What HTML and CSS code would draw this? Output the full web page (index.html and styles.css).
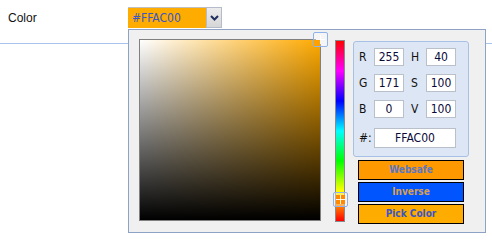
FILE: index.html
```html
<!DOCTYPE html>
<html>
<head>
<meta charset="utf-8">
<link rel="stylesheet" href="styles.css">
</head>
<body>
<div class="row">
  <label class="label">Color</label>
  <div class="field">
    <div class="value">#FFAC00</div>
    <div class="drop">
      <svg width="9" height="6" viewBox="0 0 9 6"><path d="M1 1 L4.5 4.5 L8 1" fill="none" stroke="#1f3060" stroke-width="2"/></svg>
    </div>
  </div>
</div>
<div class="popup">
  <div class="sv">
    <div class="sv-marker"><span class="mk-fill"></span><span class="mk-h"></span><span class="mk-v"></span></div>
  </div>
  <div class="hue">
    <div class="hue-marker"><span class="mk-fill"></span><span class="mk-h"></span><span class="mk-v"></span></div>
  </div>
  <div class="side">
    <div class="panel">
      <div class="grid">
        <span class="lbl">R</span><span class="inp">255</span><span class="lbl second">H</span><span class="inp">40</span>
        <span class="lbl">G</span><span class="inp">171</span><span class="lbl second">S</span><span class="inp">100</span>
        <span class="lbl">B</span><span class="inp">0</span><span class="lbl second">V</span><span class="inp">100</span>
      </div>
      <div class="hexrow">
        <span class="lbl">#:</span><span class="inp hex">FFAC00</span>
      </div>
    </div>
    <div class="buttons">
      <div class="btn websafe">Websafe</div>
      <div class="btn inverse">Inverse</div>
      <div class="btn pick">Pick Color</div>
    </div>
  </div>
</div>
</body>
</html>
```
FILE: styles.css
```css
html, body {
  margin: 0;
  padding: 0;
  background: #ffffff;
  width: 492px;
  height: 238px;
  overflow: hidden;
}
body {
  position: relative;
  font-family: "DejaVu Sans Condensed", "DejaVu Sans", sans-serif;
}
.row {
  display: flex;
  align-items: flex-start;
  height: 43px;
  border-bottom: 1px solid #a9c4ee;
}
.label {
  font-family: "Liberation Sans", Arial, sans-serif;
  font-size: 12px;
  color: #111;
  width: 120px;
  padding-left: 8px;
  padding-top: 11px;
}
.field {
  display: flex;
  margin-top: 7px;
  height: 21px;
}
.value {
  width: 74px;
  height: 20px;
  background: #ffac00;
  border-top: 1px solid #c0c0c0;
  color: #3a56c4;
  font-size: 12px;
  line-height: 20px;
  padding-left: 4px;
}
.drop {
  width: 14px;
  height: 19px;
  border: 1px solid #b4bccb;
  background: linear-gradient(#ececec, #d6d6d6);
  display: flex;
  align-items: center;
  justify-content: center;
}
.popup {
  position: absolute;
  left: 128px;
  top: 29px;
  width: 358px;
  height: 204px;
  box-sizing: border-box;
  border: 1px solid #8ea2c6;
  background: #f0f0f0;
  display: flex;
  align-items: flex-start;
  padding: 9px 0 0 10px;
}
.sv {
  position: relative;
  width: 180px;
  height: 180px;
  border: 1px solid #808080;
  background:
    linear-gradient(to top, #000 0%, rgba(0,0,0,0) 100%),
    linear-gradient(to right, #fff 0%, rgba(255,255,255,0) 100%),
    #ffaa00;
}
.sv-marker, .hue-marker {
  position: absolute;
  width: 13px;
  height: 13px;
  border: 1px solid #8fb2ea;
  border-radius: 2px;
  background: rgba(255,255,255,0.35);
}
.sv-marker {
  right: -8px;
  top: -8px;
}
.hue-marker {
  left: -3px;
  top: 151px;
}
.mk-fill {
  position: absolute;
  left: 0;
  top: 7px;
  width: 6px;
  height: 6px;
  background: #ffa200;
}
.hue-marker .mk-fill {
  left: 2px;
  top: 2px;
  width: 9px;
  height: 9px;
  background: #ff8a00;
}
.mk-h {
  position: absolute;
  left: 2px;
  top: 6px;
  width: 9px;
  height: 1px;
  background: rgba(255,255,255,0.9);
}
.mk-v {
  position: absolute;
  left: 6px;
  top: 2px;
  width: 1px;
  height: 9px;
  background: rgba(255,255,255,0.9);
}
.hue {
  position: relative;
  margin-left: 14px;
  margin-top: 1px;
  width: 8px;
  height: 180px;
  border: 1px solid #8a8a8a;
  background: linear-gradient(to bottom, #ff0000 0%, #ff00ff 16.66%, #0000ff 33.33%, #00ffff 50%, #00ff00 66.66%, #ffff00 83.33%, #ff0000 100%);
}
.side {
  margin-left: 8px;
  margin-top: 2px;
  display: flex;
  flex-direction: column;
}
.panel {
  width: 116px;
  height: 116px;
  box-sizing: border-box;
  border: 1px solid #a7c1e6;
  border-radius: 3px;
  background: #dde6f4;
  padding: 6px 0 0 5px;
}
.grid {
  display: grid;
  grid-template-columns: 15px 30px 15px 30px;
  row-gap: 8px;
}
.lbl {
  font-size: 12px;
  color: #111;
  line-height: 18px;
}
.second {
  margin-left: 7px;
  width: 15px;
}
.grid .second { margin-left: 7px; }
.grid { grid-template-columns: 15px 30px 22px 30px; }
.inp {
  height: 18px;
  box-sizing: border-box;
  border: 1px solid #b9c0ca;
  background: #fff;
  font-size: 12px;
  line-height: 16px;
  color: #0a0a3a;
  text-align: center;
}
.hexrow {
  display: flex;
  margin-top: 10px;
  align-items: center;
}
.hexrow .lbl {
  width: 15px;
}
.hex {
  width: 82px;
  height: 20px;
  line-height: 18px;
}
.buttons {
  margin-top: 3px;
  margin-left: 5px;
  display: flex;
  flex-direction: column;
  gap: 2px;
}
.btn {
  width: 106px;
  height: 20px;
  box-sizing: border-box;
  border: 1px solid #000;
  font-weight: bold;
  font-size: 10px;
  line-height: 18px;
  text-align: center;
}
.websafe { background: #ff9900; color: #5877c9; }
.inverse { background: #0055ff; color: #dca04c; }
.pick { background: #ffac00; color: #3a56c4; }
```
